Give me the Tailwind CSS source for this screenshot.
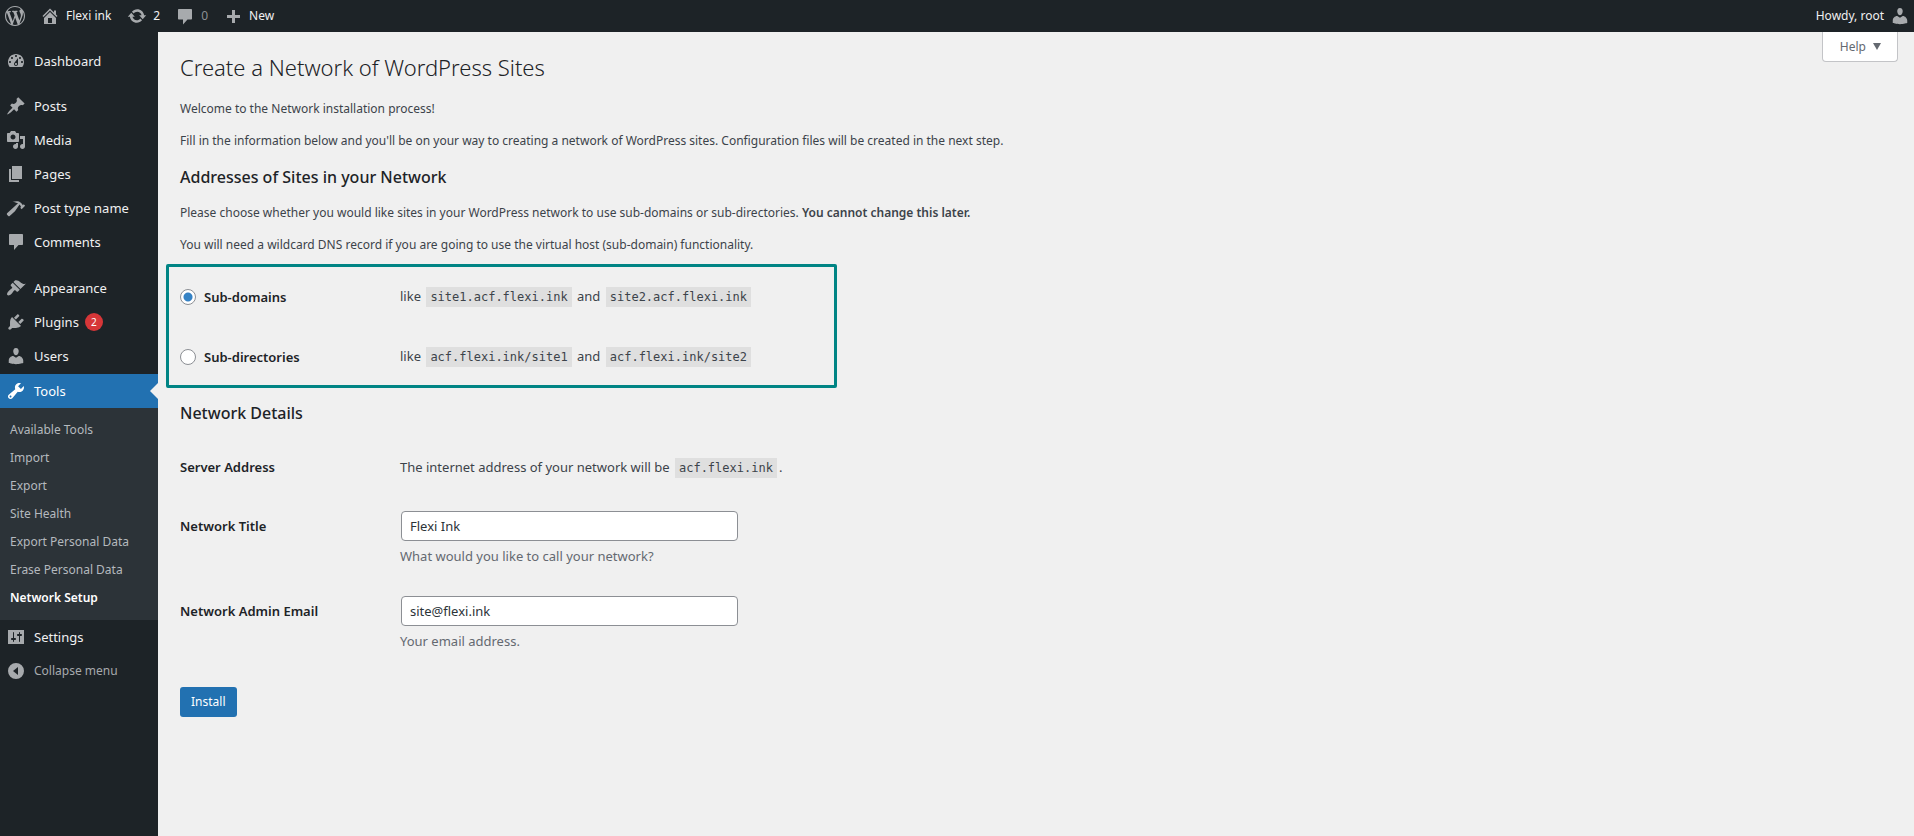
<!DOCTYPE html>
<html lang="en">
<head>
<meta charset="utf-8">
<meta name="viewport" content="width=device-width, initial-scale=1">
<title>Create a Network of WordPress Sites</title>
<script src="https://cdn.jsdelivr.net/npm/@tailwindcss/browser@4"></script>
</head>
<body class="flex min-h-screen flex-col bg-[#f0f0f0] font-['Noto_Sans','Open_Sans',sans-serif] text-[12px] leading-5 text-[#3c434a]">

<header class="flex h-8 items-center justify-between bg-[#1d2327] text-[#f0f0f1]">
  <nav class="flex items-center" aria-label="Toolbar">
    <a href="#" aria-label="About WordPress" class="ml-[5px] text-[#a7aaad]"><svg class="size-5" viewBox="0 0 20 20" fill="currentColor"><path d="M20 10c0-5.51-4.49-10-10-10C4.48 0 0 4.49 0 10c0 5.52 4.48 10 10 10 5.51 0 10-4.48 10-10zM7.78 15.37L4.37 6.22c.55-.02 1.17-.08 1.17-.08.5-.06.44-1.13-.06-1.11 0 0-1.45.11-2.37.11-.18 0-.37 0-.58-.01C4.12 2.69 6.87 1.11 10 1.11c2.33 0 4.45.87 6.05 2.34-.68-.11-1.65.39-1.65 1.58 0 .74.45 1.36.9 2.1.35.61.55 1.36.55 2.46 0 1.49-1.4 5-1.4 5l-3.03-8.37c.54-.02.82-.17.82-.17.5-.05.44-1.25-.06-1.22 0 0-1.44.12-2.38.12-.87 0-2.33-.12-2.33-.12-.5-.03-.56 1.2-.06 1.22l.92.08 1.26 3.41zM17.41 10c.24-.64.74-1.87.43-4.25.7 1.29 1.05 2.71 1.05 4.25 0 3.29-1.73 6.24-4.4 7.78.97-2.59 1.94-5.2 2.92-7.78zM6.1 18.09C3.12 16.65 1.11 13.53 1.11 10c0-1.3.23-2.48.72-3.59C3.25 10.3 4.67 14.2 6.1 18.09zm4.03-6.63l2.58 6.98c-.86.29-1.76.45-2.71.45-.79 0-1.57-.11-2.29-.33.81-2.38 1.62-4.74 2.42-7.1z"/></svg></a>
    <a href="#" class="ml-[15px] flex items-center gap-[6px]"><svg class="size-5 text-[#a7aaad]" viewBox="0 0 20 20" fill="currentColor"><path fill-rule="evenodd" d="M16 8.5l1.53 1.53-1.06 1.06L10 4.6l-6.47 6.49-1.06-1.06L10 2.5l4 4v-2h2v4zm-6-2.46l6 5.99V18H4v-5.97zM12 17v-5H8v5h4z"/></svg>Flexi ink</a>
    <a href="#" class="ml-4 flex items-center gap-[6px]" aria-label="2 updates available"><svg class="size-5 text-[#a7aaad]" viewBox="0 0 20 20" fill="currentColor"><path d="M10.2 3.28c3.53 0 6.43 2.61 6.92 6h2.08l-3.5 4-3.5-4h2.32c-.45-1.97-2.21-3.45-4.32-3.45-1.45 0-2.73.71-3.54 1.78L4.95 5.66C6.23 4.2 8.11 3.28 10.2 3.28zm-.4 13.44c-3.52 0-6.43-2.61-6.92-6H.8l3.5-4c1.17 1.33 2.33 2.67 3.5 4H5.48c.45 1.97 2.21 3.45 4.32 3.45 1.45 0 2.73-.71 3.54-1.78l1.71 1.95c-1.28 1.46-3.15 2.38-5.25 2.38z"/></svg>2</a>
    <a href="#" class="ml-[15px] flex items-center gap-[6px] text-[#8c8f94]" aria-label="0 comments"><svg class="size-5 text-[#a7aaad]" viewBox="0 0 20 20" fill="currentColor"><path d="M4 3h12c.6 0 1 .4 1 1v8.500c0 .6-.4 1-1 1h-3.500L8 18.500v-5H4c-.6 0-1-.4-1-1V4c0-.6.4-1 1-1z"/></svg>0</a>
    <a href="#" class="ml-[15px] flex items-center gap-[6px]"><svg class="size-5 text-[#a7aaad]" viewBox="0 0 20 20" fill="currentColor"><path d="M17 9v3h-5v5H9v-5H4V9h5V4h3v5h5z"/></svg>New</a>
  </nav>
  <a href="#" class="mr-[4px] flex items-center gap-[6px]">Howdy, root<svg class="size-5 text-[#a7aaad]" viewBox="0 0 20 20" fill="currentColor"><path d="M10 9.250c-2.270 0-2.730-3.440-2.730-3.440C7 4.020 7.820 2 9.970 2c2.160 0 2.980 2.020 2.710 3.810 0 0-.41 3.440-2.680 3.440zm0 2.570L12.720 10c2.390 0 4.520 2.330 4.520 4.530v2.490s-3.650 1.130-7.240 1.130c-3.650 0-7.240-1.130-7.240-1.130v-2.490c0-2.250 1.940-4.480 4.470-4.480z"/></svg></a>
</header>

<div class="flex grow">
  <nav class="w-[158px] shrink-0 bg-[#1d2327] pt-3 text-[13px] text-[#f0f0f1]" aria-label="Main menu">
    <ul>
      <li><a href="#" class="flex h-[34px] items-center gap-2 pl-[6px]"><svg class="size-5 text-[#a7aaad]" viewBox="0 0 20 20" fill="currentColor"><path d="M3.760 16h12.480c1.100-1.370 1.760-3.110 1.760-5 0-4.420-3.580-8-8-8s-8 3.580-8 8c0 1.890.66 3.630 1.760 5zM10 4c.55 0 1 .45 1 1s-.45 1-1 1-1-.45-1-1 .45-1 1-1zM6 6c.55 0 1 .45 1 1s-.45 1-1 1-1-.45-1-1 .45-1 1-1zm8 0c.55 0 1 .45 1 1s-.45 1-1 1-1-.45-1-1 .45-1 1-1zm-5.370 5.550L12 7v6c0 1.100-.9 2-2 2s-2-.9-2-2c0-.57.24-1.080.63-1.450zM4 10c.55 0 1 .45 1 1s-.45 1-1 1-1-.45-1-1 .45-1 1-1zm12 0c.55 0 1 .45 1 1s-.45 1-1 1-1-.45-1-1 .45-1 1-1zm-5 3c0-.55-.45-1-1-1s-1 .45-1 1 .45 1 1 1 1-.45 1-1z"/></svg>Dashboard</a></li>
    </ul>
    <ul class="mt-[11px]">
      <li><a href="#" class="flex h-[34px] items-center gap-2 pl-[6px]"><svg class="size-5 text-[#a7aaad]" viewBox="0 0 20 20" fill="currentColor"><path d="M10.440 3.020l1.820-1.820 6.360 6.350-1.830 1.820c-1.050-.68-2.480-.57-3.410.36l-.75.75c-.92.93-1.040 2.350-.35 3.410l-1.830 1.820-2.410-2.410-2.800 2.790c-.42.42-3.380 2.710-3.800 2.290s1.860-3.390 2.280-3.810l2.790-2.790L4.100 9.360l1.830-1.820c1.050.69 2.480.57 3.400-.36l.75-.75c.93-.92 1.050-2.350.36-3.410z"/></svg>Posts</a></li>
      <li><a href="#" class="flex h-[34px] items-center gap-2 pl-[6px]"><svg class="size-5 text-[#a7aaad]" viewBox="0 0 20 20" fill="currentColor"><path d="M13 11V4c0-.55-.45-1-1-1h-1.670L9 1H5L3.670 3H2c-.55 0-1 .45-1 1v7c0 .55.45 1 1 1h10c.55 0 1-.45 1-1zM7 4.500c1.380 0 2.500 1.120 2.500 2.500S8.380 9.500 7 9.500 4.500 8.380 4.500 7 5.620 4.500 7 4.500zM14 6h5v10.500c0 1.380-1.120 2.500-2.500 2.500S14 17.880 14 16.500s1.120-2.500 2.500-2.500c.17 0 .34.02.5.05V9h-3V6zm-4 8.050V13h2v3.500c0 1.380-1.120 2.500-2.500 2.500S7 17.880 7 16.500 8.120 14 9.500 14c.17 0 .34.02.5.05z"/></svg>Media</a></li>
      <li><a href="#" class="flex h-[34px] items-center gap-2 pl-[6px]"><svg class="size-5 text-[#a7aaad]" viewBox="0 0 20 20" fill="currentColor"><path d="M6 15V2h10v13H6zm-1 1h8v2H3V5h2v11z"/></svg>Pages</a></li>
      <li><a href="#" class="flex h-[34px] items-center gap-2 pl-[6px]"><svg class="size-5 text-[#a7aaad]" viewBox="0 0 20 20" fill="currentColor"><path d="M17.700 6.320l1.410 1.420-3.470 3.410-1.420-1.420.84-.82c-.32-.76-.81-1.570-1.510-2.310l-4.610 6.590-5.260 4.700c-.39.39-1.020.39-1.420 0l-1.200-1.200c-.39-.39-.39-1.020 0-1.410l10.970-9.920c-1.370-.86-3.210-1.460-5.670-1.480 2.700-.82 4.950-.93 6.580-.3 1.700.66 2.820 2.200 3.910 3.580z"/></svg>Post type name</a></li>
      <li><a href="#" class="flex h-[34px] items-center gap-2 pl-[6px]"><svg class="size-5 text-[#a7aaad]" viewBox="0 0 20 20" fill="currentColor"><path d="M4 2h12c.6 0 1 .4 1 1v9c0 .6-.4 1-1 1h-3.500L8 18v-5H4c-.6 0-1-.4-1-1V3c0-.6.4-1 1-1z"/></svg>Comments</a></li>
    </ul>
    <ul class="mt-3">
      <li><a href="#" class="flex h-[34px] items-center gap-2 pl-[6px]"><svg class="size-5 text-[#a7aaad]" viewBox="0 0 20 20" fill="currentColor"><path d="M14.480 11.060L7.410 3.990l1.500-1.500c.5-.56 2.300-.47 3.510.32 1.210.8 1.430 1.280 2.910 2.100 1.180.64 2.450 1.260 4.450.85zm-.71.71L6.700 4.700 4.930 6.470c-.39.39-.39 1.020 0 1.410l1.060 1.060c.39.39.39 1.030 0 1.420-.6.6-1.430 1.110-2.210 1.690-.35.26-.7.53-1.010.84C1.430 14.230.4 16.080 1.400 17.070c.99 1 2.840-.03 4.180-1.360.31-.31.58-.66.85-1.020.57-.78 1.080-1.610 1.690-2.210.39-.39 1.020-.39 1.410 0l1.060 1.060c.39.39 1.020.39 1.410 0z"/></svg>Appearance</a></li>
      <li><a href="#" class="flex h-[34px] items-center gap-2 pl-[6px]"><svg class="size-5 text-[#a7aaad]" viewBox="0 0 20 20" fill="currentColor"><path d="M13.110 4.360L9.870 7.600 8 5.730l3.240-3.240c.35-.34 1.050-.2 1.560.32.520.51.660 1.210.310 1.550zm-8 1.770l.91-1.120 9.010 9.010-1.190.84c-.71.71-2.630 1.160-3.820 1.160H6.140L4.900 17.260c-.59.59-1.540.59-2.120 0-.59-.58-.59-1.530 0-2.120l1.240-1.240v-3.880c0-1.130.4-3.190 1.090-3.890zm7.260 3.970l3.240-3.240c.34-.35 1.040-.21 1.550.31.52.51.66 1.210.31 1.550l-3.240 3.250z"/></svg><span class="flex items-center gap-[6px]">Plugins <span class="flex size-[18px] items-center justify-center rounded-full bg-[#d63638] text-[10px] text-white">2</span></span></a></li>
      <li><a href="#" class="flex h-[34px] items-center gap-2 pl-[6px]"><svg class="size-5 text-[#a7aaad]" viewBox="0 0 20 20" fill="currentColor"><path d="M10 9.250c-2.270 0-2.730-3.440-2.730-3.440C7 4.020 7.820 2 9.970 2c2.160 0 2.980 2.020 2.710 3.810 0 0-.41 3.440-2.680 3.440zm0 2.570L12.720 10c2.390 0 4.520 2.330 4.520 4.530v2.490s-3.650 1.130-7.240 1.130c-3.650 0-7.240-1.130-7.240-1.130v-2.490c0-2.250 1.940-4.480 4.470-4.480z"/></svg>Users</a></li>
      <li class="mt-px">
        <a href="#" aria-current="true" class="flex h-[34px] items-center gap-2 bg-[#2271b1] pl-[6px] text-white"><svg class="size-5" viewBox="0 0 20 20" fill="currentColor"><path d="M16.680 9.770c-1.340 1.340-3.300 1.670-4.950.99l-5.410 6.520c-.99.99-2.590.99-3.580 0s-.99-2.590 0-3.570l6.520-5.420c-.68-1.650-.35-3.610.99-4.950 1.280-1.280 3.120-1.620 4.720-1.060l-2.890 2.890 2.820 2.820 2.860-2.870c.53 1.580.18 3.390-1.080 4.650zM3.810 16.210c.4.39 1.040.39 1.430 0 .4-.4.4-1.040 0-1.430-.39-.4-1.030-.4-1.430 0-.39.39-.39 1.030 0 1.430z"/></svg>Tools<svg class="ml-auto h-4 w-2 text-[#f0f0f0]" viewBox="0 0 8 16" fill="currentColor"><path d="M8 0v16L0 8z"/></svg></a>
        <ul class="bg-[#2c3338] py-2 text-[12px] text-[#b4b9be]">
          <li><a href="#" class="flex h-7 items-center pl-[10px]">Available Tools</a></li>
          <li><a href="#" class="flex h-7 items-center pl-[10px]">Import</a></li>
          <li><a href="#" class="flex h-7 items-center pl-[10px]">Export</a></li>
          <li><a href="#" class="flex h-7 items-center pl-[10px]">Site Health</a></li>
          <li><a href="#" class="flex h-7 items-center pl-[10px]">Export Personal Data</a></li>
          <li><a href="#" class="flex h-7 items-center pl-[10px]">Erase Personal Data</a></li>
          <li><a href="#" aria-current="page" class="flex h-7 items-center pl-[10px] font-semibold text-white">Network Setup</a></li>
        </ul>
      </li>
      <li><a href="#" class="flex h-[34px] items-center gap-2 pl-[6px]"><svg class="size-5 text-[#a7aaad]" viewBox="0 0 20 20" fill="currentColor"><path fill-rule="evenodd" d="M2 3h16v14H2zM8 11h1c.55 0 1 .45 1 1s-.45 1-1 1H8v1.500c0 .28-.22.5-.5.5s-.5-.22-.5-.5V13H6c-.55 0-1-.45-1-1s.45-1 1-1h1V5.500c0-.28.22-.5.5-.5s.5.22.5.5V11zm5-2h-1c-.55 0-1-.45-1-1s.45-1 1-1h1V5.500c0-.28.22-.5.5-.5s.5.22.5.5V7h1c.55 0 1 .45 1 1s-.45 1-1 1h-1v5.500c0 .28-.22.5-.5.5s-.5-.22-.5-.5V9z"/></svg>Settings</a></li>
    </ul>
    <button type="button" class="flex h-[34px] w-full items-center gap-2 pl-[6px] text-[12px] text-[#a7aaad]"><svg class="size-5" viewBox="0 0 20 20" fill="currentColor"><path fill-rule="evenodd" d="M10 2a8 8 0 1 0 0 16 8 8 0 0 0 0-16zM12 6v8l-5-4z"/></svg>Collapse menu</button>
  </nav>

  <main class="flex grow items-start justify-between pr-4 pl-[22px]">
    <form class="w-full max-w-[900px]">
      <h1 class="mt-5 text-[22px] leading-[30px] font-light text-[#1d2327]">Create a Network of WordPress Sites</h1>
      <p class="mt-[17px]">Welcome to the Network installation process!</p>
      <p class="mt-3">Fill in the information below and you'll be on your way to creating a network of WordPress sites. Configuration files will be created in the next step.</p>
      <h2 class="mt-[14px] text-[16px] leading-6 font-medium text-[#1d2327]">Addresses of Sites in your Network</h2>
      <p class="mt-[14px]">Please choose whether you would like sites in your WordPress network to use sub-domains or sub-directories. <strong class="font-semibold">You cannot change this later.</strong></p>
      <p class="mt-3">You will need a wildcard DNS record if you are going to use the virtual host (sub-domain) functionality.</p>

      <div role="radiogroup" aria-label="Addresses of Sites in your Network" class="mt-[9px] -ml-[14px] grid max-w-[671px] grid-cols-[220px_1fr] gap-y-[39px] rounded-xs border-3 border-[#008484] pt-[19px] pb-[18px] pl-[11px] text-[13px]">
        <label class="flex items-center gap-2 font-semibold text-[#1d2327]"><input type="radio" name="subdomain" checked class="size-4 appearance-none rounded-full border border-[#8c8f94] bg-white checked:bg-radial checked:from-[#3582c4] checked:from-[4px] checked:to-white checked:to-[5px]">Sub-domains</label>
        <div>like <code class="mx-[2px] bg-[#dfdfdf] px-1 py-[3px] font-['DejaVu_Sans_Mono',monospace] text-[12px]">site1.acf.flexi.ink</code> and <code class="mx-[2px] bg-[#dfdfdf] px-1 py-[3px] font-['DejaVu_Sans_Mono',monospace] text-[12px]">site2.acf.flexi.ink</code></div>
        <label class="flex items-center gap-2 font-semibold text-[#1d2327]"><input type="radio" name="subdomain" class="size-4 appearance-none rounded-full border border-[#8c8f94] bg-white checked:bg-radial checked:from-[#3582c4] checked:from-[4px] checked:to-white checked:to-[5px]">Sub-directories</label>
        <div>like <code class="mx-[2px] bg-[#dfdfdf] px-1 py-[3px] font-['DejaVu_Sans_Mono',monospace] text-[12px]">acf.flexi.ink/site1</code> and <code class="mx-[2px] bg-[#dfdfdf] px-1 py-[3px] font-['DejaVu_Sans_Mono',monospace] text-[12px]">acf.flexi.ink/site2</code></div>
      </div>

      <h2 class="mt-[13px] text-[16px] leading-6 font-medium text-[#1d2327]">Network Details</h2>
      <div class="mt-8 grid grid-cols-[220px_1fr] text-[13px]">
        <div class="font-semibold text-[#1d2327]">Server Address</div>
        <div>The internet address of your network will be <code class="mx-[2px] bg-[#dfdfdf] px-1 py-[3px] font-['DejaVu_Sans_Mono',monospace] text-[12px]">acf.flexi.ink</code>.</div>
        <label for="sitename" class="mt-[38px] font-semibold text-[#1d2327]">Network Title</label>
        <div class="mt-[33px]">
          <input id="sitename" type="text" value="Flexi Ink" class="mx-px block h-[30px] w-full max-w-[337px] rounded-sm border border-[#8c8f94] bg-white px-2 text-[#2c3338]">
          <p class="mt-[5px] text-[#646970]">What would you like to call your network?</p>
        </div>
        <label for="email" class="mt-[35px] font-semibold text-[#1d2327]">Network Admin Email</label>
        <div class="mt-[30px]">
          <input id="email" type="text" value="site@flexi.ink" class="mx-px block h-[30px] w-full max-w-[337px] rounded-sm border border-[#8c8f94] bg-white px-2 text-[#2c3338]">
          <p class="mt-[5px] text-[#646970]">Your email address.</p>
        </div>
      </div>
      <button type="submit" class="mt-9 h-[30px] rounded-[3px] bg-[#2271b1] px-[11px] text-[12px] text-white">Install</button>
    </form>
    <button type="button" class="flex h-[30px] items-center gap-[7px] rounded-b-sm border border-t-0 border-[#c3c4c7] bg-white pr-4 pl-[17px] text-[12px] text-[#646970]">Help<svg class="h-[7px] w-2" viewBox="0 0 8 7" fill="currentColor"><path d="M0 0h8L4 7z"/></svg></button>
  </main>
</div>
</body>
</html>
